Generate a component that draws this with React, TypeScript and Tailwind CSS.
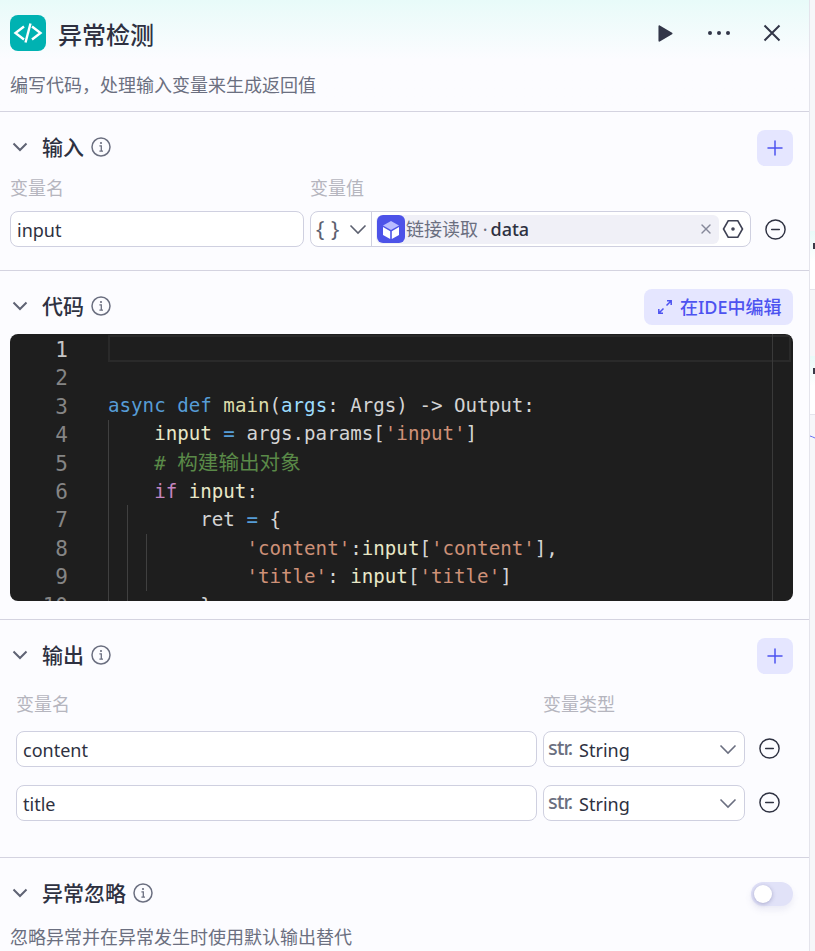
import { X, Plus, CircleMinus } from "lucide-react";
import type { ReactNode } from "react";

const FONT = "font-['Noto_Sans','Noto_Sans_CJK_SC',sans-serif]";
const MONO = "font-['DejaVu_Sans_Mono','Noto_Sans_CJK_SC',monospace]";

function Chevron({ className }: { className?: string }) {
  return (
    <svg width="20" height="20" viewBox="0 0 20 20" fill="none" stroke="currentColor" strokeWidth={1.6} className={className}>
      <path d="M2.500 6.500 10 14l7.500-7.500" />
    </svg>
  );
}

function SectionChevron() {
  return (
    <svg width="20" height="20" viewBox="0 0 20 20" fill="none" stroke="currentColor" strokeWidth={2} className="text-[#5f6374] ml-[10px] -mt-[2px]">
      <path d="M3.500 6.500 10 13l6.500-6.500" />
    </svg>
  );
}

function InfoIcon() {
  return (
    <svg width="20" height="20" viewBox="0 0 20 20" fill="none" stroke="currentColor" className="ml-[7px] text-[#6b6f80] -mt-[2px]">
      <circle cx="10" cy="10" r="9" strokeWidth="1.5" />
      <circle cx="10" cy="6" r="1.1" fill="currentColor" stroke="none" />
      <path d="M8.400 8.800H10.300V14M8.400 14.200h3.600" strokeWidth="1.3" />
    </svg>
  );
}

function SectionHead({ title, right }: { title: string; right?: ReactNode }) {
  return (
    <div className="flex items-center h-9">
      <SectionChevron />
      <span className="ml-[12px] -mt-[2px] text-[21px] leading-7 font-medium text-[#2e3141]">{title}</span>
      <InfoIcon />
      <div className="ml-auto mr-[16px]">{right}</div>
    </div>
  );
}

function AddButton() {
  return (
    <div className="w-9 h-9 rounded-lg bg-[#e5e6ff] flex items-center justify-center">
      <Plus size={24} strokeWidth={1.5} className="text-[#4d53f0]" />
    </div>
  );
}

function OutputRow({ name }: { name: string }) {
  return (
    <div className="flex items-center h-9">
      <div className="w-[521px] h-9 rounded-lg border border-[#cfd0e0] bg-white flex items-center px-[6px] pt-[2px] text-[18px] text-[#2e3141]">
        {name}
      </div>
      <div className="ml-[6px] w-[202px] h-9 rounded-lg border border-[#cfd0e0] bg-white flex items-center pl-[4px] pr-[6px]">
        <span className="text-[20px] font-medium text-[#6b6f80] -mt-[3px] tracking-[-1px]">str.</span>
        <span className="ml-[7px] mt-[2px] text-[18px] text-[#2e3141]">String</span>
        <Chevron className="ml-auto text-[#6b6f80]" />
      </div>
      <CircleMinus size={23} strokeWidth={1.5} className="ml-[13px] -mt-[2px] text-[#2e3141]" />
    </div>
  );
}

const LINE_NOS = [1, 2, 3, 4, 5, 6, 7, 8, 9, 10];

const KW = "text-[#569cd6]";
const FN = "text-[#dcdcaa]";
const VAR = "text-[#9cdcfe]";
const STR = "text-[#ce9178]";
const TXT = "text-[#d4d4d4]";
const PLAIN = "text-[#e8e8c8]";

function CodeEditor() {
  return (
    <div className={`relative ml-[10px] mr-[16px] h-[267px] rounded-lg bg-[#1e1e1e] overflow-hidden flex ${MONO} text-[19.17px] leading-[28.4px]`}>
      <div className="w-[98px] shrink-0 pr-[40px] pt-[2px] text-right text-[#858585] text-[21px] leading-[28.4px]">
        {LINE_NOS.map((n) => (
          <div key={n} className={n === 1 ? "text-[#c6c6c6]" : ""}>{n}</div>
        ))}
      </div>
      <div className="absolute left-[98px] right-[2px] top-[1px] h-[27px] border-2 border-[#2a2a2a]" />
      <div className="absolute left-[762px] top-0 bottom-0 w-px bg-[#3a3a3a]" />
      <div className="absolute left-[98px] top-[86px] bottom-0 w-px bg-[#404040]" />
      <div className="absolute left-[117px] top-[171px] bottom-0 w-px bg-[#404040]" />
      <div className="absolute left-[136px] top-[200px] h-[57px] w-px bg-[#404040]" />
      <div className="whitespace-pre pt-[1px]">
        <div>&nbsp;</div>
        <div>&nbsp;</div>
        <div>
          <span className={KW}>async def </span>
          <span className={FN}>main</span>
          <span className={TXT}>(</span>
          <span className={VAR}>args</span>
          <span className={TXT}>: Args) -&gt; Output:</span>
        </div>
        <div>
          <span className={PLAIN}>{"    input"}</span>
          <span className={KW}> = </span>
          <span className={TXT}>args.params[</span>
          <span className={STR}>'input'</span>
          <span className={TXT}>]</span>
        </div>
        <div className="text-[#5a8a48]">
          {"    # "}
          <span className="text-[20.6px]">构建输出对象</span>
        </div>
        <div>
          <span className="text-[#c586c0]">{"    if "}</span>
          <span className={PLAIN}>input</span>
          <span className={TXT}>:</span>
        </div>
        <div>
          <span className={TXT}>{"        ret"}</span>
          <span className={KW}> = </span>
          <span className={TXT}>{"{"}</span>
        </div>
        <div>
          <span className={STR}>{"            'content'"}</span>
          <span className={TXT}>:</span>
          <span className={PLAIN}>input</span>
          <span className={TXT}>[</span>
          <span className={STR}>'content'</span>
          <span className={TXT}>],</span>
        </div>
        <div>
          <span className={STR}>{"            'title'"}</span>
          <span className={TXT}>: </span>
          <span className={PLAIN}>input</span>
          <span className={TXT}>[</span>
          <span className={STR}>'title'</span>
          <span className={TXT}>]</span>
        </div>
        <div className={TXT}>{"        }"}</div>
      </div>
    </div>
  );
}

function CanvasNode() {
  return (
    <div className="h-[59px] shrink-0 pt-[12px] bg-gradient-to-b from-[#e8fbf9] to-white to-[30px] border-b border-[#e4e4ec]">
      <div className="ml-[3px] w-[2px] h-[6px] bg-[#3a3a48]" />
    </div>
  );
}

export default function App() {
  return (
    <div className={`${FONT} w-[815px] h-[951px] overflow-hidden flex bg-[#f6f6f9]`}>
      <div className="w-[810px] h-full shrink-0 bg-[#fcfcff] border-r border-[#e4e4ec]">
        {/* header */}
        <div className="h-[112px] border-b border-[#d4d3e0] bg-gradient-to-b from-[#e8fbf9] to-[#fcfcff] to-[60px]">
          <div className="flex items-center h-[66px] pl-[10px] pr-[28px]">
            <div className="w-9 h-9 rounded-lg bg-[#00b2b2]">
              <svg width="36" height="36" viewBox="0 0 36 36" fill="none" stroke="white" strokeWidth="2.4">
                <path d="M14 11.500 5.500 18l8.500 6.500" />
                <path d="M22 11.500 30.500 18 22 24.500" />
                <path d="M20.500 8.500 15.500 27.500" />
              </svg>
            </div>
            <span className="ml-[12px] mt-[3px] text-[24px] font-medium text-[#2e3141]">异常检测</span>
            <svg width="15" height="17" viewBox="0 0 16 18" className="ml-auto" fill="#323648">
              <path d="M0.500 1.200c0-.8.8-1.200 1.400-.8L15 8.200c.6.4.6 1.200 0 1.600L1.900 17.600c-.6.4-1.400 0-1.400-.8z" />
            </svg>
            <svg width="24" height="6" viewBox="0 0 24 6" className="ml-[34px]" fill="#323648">
              <circle cx="3" cy="3" r="2" />
              <circle cx="12" cy="3" r="2" />
              <circle cx="21" cy="3" r="2" />
            </svg>
            <svg width="18" height="18" viewBox="0 0 18 18" className="ml-[32px]" stroke="#323648" strokeWidth="2" fill="none">
              <path d="M1.500 1.500l15 15M16.500 1.500l-15 15" />
            </svg>
          </div>
          <div className="pl-[10px] mt-[7px] text-[18px] leading-6 text-[#6b6f80]">编写代码，处理输入变量来生成返回值</div>
        </div>

        {/* input */}
        <div className="h-[159px] border-b border-[#d4d3e0] pt-[18px]">
          <SectionHead title="输入" right={<AddButton />} />
          <div className="flex mt-[10px] pl-[10px] text-[18px] leading-6 text-[#b5b5be]">
            <span className="w-[300px]">变量名</span>
            <span>变量值</span>
          </div>
          <div className="flex items-center mt-[11px] pl-[10px]">
            <div className="w-[294px] h-9 rounded-lg border border-[#cfd0e0] bg-white flex items-center px-[6px] pt-[2px] text-[18px] text-[#2e3141]">
              input
            </div>
            <div className="ml-[6px] w-[441px] h-9 rounded-lg border border-[#cfd0e0] bg-white flex items-center">
              <div className="w-[61px] h-full shrink-0 border-r border-[#cfd0e0] flex items-center pl-[5px] text-[#5d6170]">
                <span className="text-[22px] w-[12px] -mt-[2px]">{"{"}</span>
                <span className="text-[22px] w-[12px] ml-[3px] -mt-[2px]">{"}"}</span>
                <Chevron className="ml-[5px]" />
              </div>
              <div className="ml-[4px] w-[343px] h-[29px] rounded-md bg-[#f0f0f7] flex items-center">
                <svg width="28" height="28" viewBox="0 0 28 28" className="ml-[1px] shrink-0">
                  <rect width="28" height="28" rx="6" fill="#4d53e8" />
                  <path d="M14 6l8 4.500-8 4.500-8-4.500z" fill="#b9bcff" />
                  <path d="M6 12l7.200 4.200V24L6 20zM22 12l-7.200 4.200V24L22 20z" fill="white" />
                </svg>
                <span className="ml-[1px] mt-[1px] text-[18px] text-[#6b6f80]">链接读取 ·</span>
                <span className="ml-[3px] mt-[1px] text-[18px] font-medium text-[#2e3141]">data</span>
                <X size={16} strokeWidth={2} className="ml-auto mr-[5px] text-[#85889a] -mt-[1px]" />
              </div>
              <svg width="22" height="22" viewBox="0 0 22 22" fill="none" stroke="#3f4254" strokeWidth="1.6" className="ml-[3px]">
                <path d="M6.200 2.800h9.600L20.500 11l-4.700 8.200H6.200L1.500 11z" />
                <circle cx="11" cy="11" r="1" fill="#3f4254" />
              </svg>
            </div>
            <CircleMinus size={23} strokeWidth={1.5} className="ml-[13px] text-[#2e3141]" />
          </div>
        </div>

        {/* code */}
        <div className="h-[349px] border-b border-[#d4d3e0] pt-[18px]">
          <SectionHead
            title="代码"
            right={
              <div className="h-9 w-[149px] rounded-lg bg-[#e5e6ff] flex items-center pl-[13px] text-[#4d53f0]">
                <svg width="16" height="16" viewBox="0 0 16 16" fill="none" stroke="currentColor" strokeWidth="1.5">
                  <path d="M9.500 6.500 14 2M10 1.800h4.200V6M6.500 9.500 2 14M6 14.200H1.800V10" />
                </svg>
                <span className="ml-[7px] text-[18px] font-medium">在IDE中编辑</span>
              </div>
            }
          />
          <div className="mt-[9px]">
            <CodeEditor />
          </div>
        </div>

        {/* output */}
        <div className="h-[238px] border-b border-[#d4d3e0] pt-[18px]">
          <SectionHead title="输出" right={<AddButton />} />
          <div className="flex mt-[18px] pl-[16px] text-[18px] leading-6 text-[#b5b5be]">
            <span className="w-[527px]">变量名</span>
            <span>变量类型</span>
          </div>
          <div className="mt-[15px] pl-[16px] flex flex-col gap-[18px]">
            <OutputRow name="content" />
            <OutputRow name="title" />
          </div>
        </div>

        {/* ignore */}
        <div className="pt-[18px]">
          <div className="flex items-center h-9">
            <SectionChevron />
            <span className="ml-[12px] -mt-[2px] text-[21px] leading-7 font-medium text-[#2e3141]">异常忽略</span>
            <InfoIcon />
            <div className="ml-auto mr-[16px] w-[42px] h-6 rounded-full bg-[#e1e2f8] p-[3px] shadow-[0_4px_6px_rgba(120,120,180,0.12)]">
              <div className="w-[18px] h-[18px] rounded-full bg-white shadow-[0_1px_4px_rgba(60,60,120,0.35)]" />
            </div>
          </div>
          <div className="pl-[10px] mt-[13px] text-[18px] leading-6 text-[#6b6f80]">忽略异常并在异常发生时使用默认输出替代</div>
        </div>
      </div>

      {/* canvas peeking out behind the panel */}
      <div className="flex-1 flex flex-col">
        <div className="h-[231px] shrink-0" />
        <CanvasNode />
        <div className="h-[66px] shrink-0" />
        <CanvasNode />
        <svg width="5" height="6" viewBox="0 0 5 6" fill="none" stroke="#6a6ff0" className="mt-[20px]">
          <path d="M0 1c2 .2 3 1.500 5 2" />
        </svg>
      </div>
    </div>
  );
}
